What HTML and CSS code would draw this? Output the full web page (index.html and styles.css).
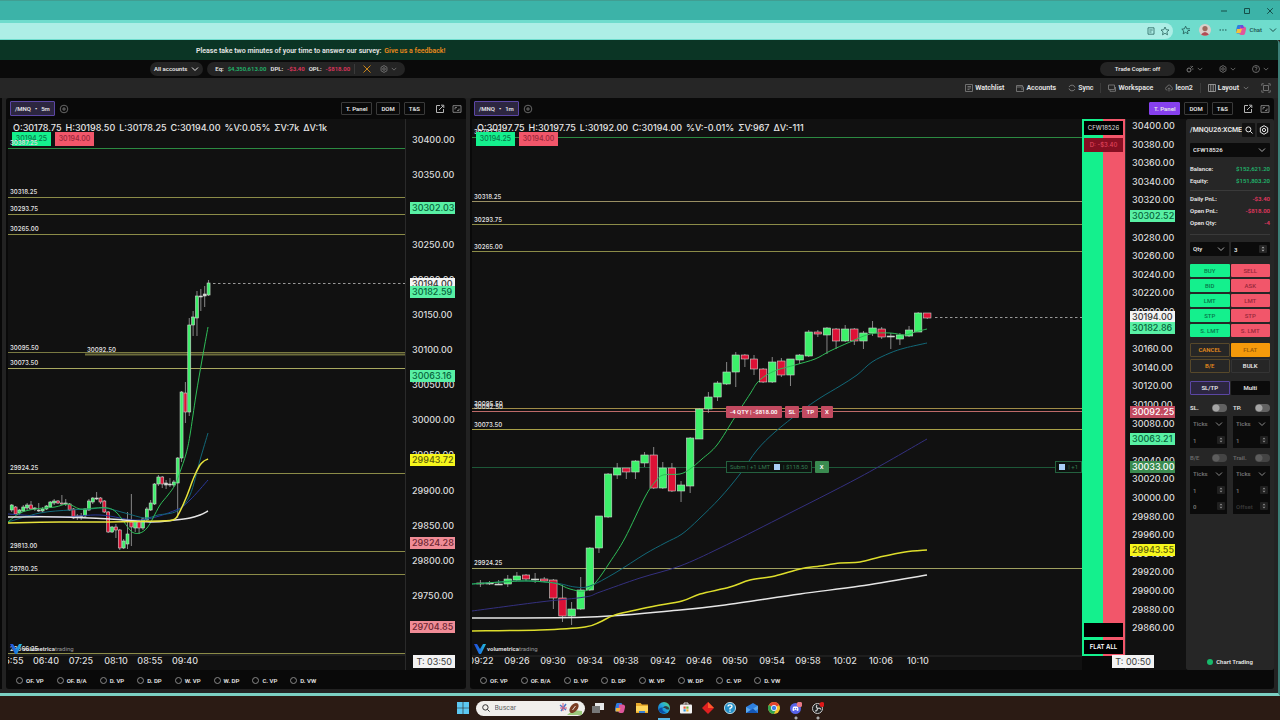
FILE: index.html
```html
<!DOCTYPE html>
<html lang="en">
<head>
<meta charset="utf-8">
<title>Volumetrica Trading</title>
<link rel="stylesheet" href="styles.css">
</head>
<body>
<svg class="defs" width="0" height="0" aria-hidden="true">
  <defs>
    <linearGradient id="logo" x1="0" x2="1"><stop offset="0" stop-color="#2447d8"/><stop offset=".5" stop-color="#1b7be0"/><stop offset="1" stop-color="#27c4d8"/></linearGradient>
    <linearGradient id="edge" x1="0" x2="1" y1="1" y2="0"><stop offset="0" stop-color="#0b63c4"/><stop offset=".55" stop-color="#24a9dc"/><stop offset="1" stop-color="#57dd6b"/></linearGradient>
    <symbol id="chev" viewBox="0 0 8 8"><path d="M1 2.5 4 5.5 7 2.5" fill="none" stroke="currentColor"/></symbol>
    <symbol id="gear" viewBox="0 0 10 10"><path d="M5 .7 8.7 2.8V7.2L5 9.3 1.3 7.2V2.8Z" fill="none" stroke="currentColor"/><circle cx="5" cy="5" r="1.6" fill="none" stroke="currentColor"/></symbol>
    <symbol id="plus" viewBox="0 0 10 10"><circle cx="5" cy="5" r="3.8" fill="none" stroke="currentColor" stroke-width=".8"/><path d="M5 3V7M3 5H7" stroke="currentColor" stroke-width=".8"/></symbol>
    <symbol id="popout" viewBox="0 0 10 10"><path d="M5 1.5H1.5V8.5H8.5V5M4 6 8.5 1.5M6 1.2H8.8V4" fill="none" stroke="currentColor"/></symbol>
    <symbol id="expand" viewBox="0 0 10 10"><path d="M1 1.7H9V8.3H1ZM3 5.5V3.6H5M7 4.5V6.4H5" fill="none" stroke="currentColor" stroke-width=".9"/></symbol>
    <symbol id="star" viewBox="0 0 10 10"><path d="M5 1 6.2 3.7 9 4 6.9 5.9 7.5 8.8 5 7.3 2.5 8.8 3.1 5.9 1 4 3.8 3.7Z" fill="none" stroke="currentColor" stroke-width=".8"/></symbol>
  </defs>
</svg>

<div class="browser">
  <div class="titlebar">
    <button class="bare" aria-label="Minimize"><svg class="i8" viewBox="0 0 8 8"><path d="M1 4H7" stroke="currentColor"/></svg></button>
    <button class="bare" aria-label="Maximize"><svg class="i8" viewBox="0 0 8 8"><path d="M1.5 1.5H6.5V6.5H1.5Z" fill="none" stroke="currentColor"/></svg></button>
    <button class="bare" aria-label="Close"><svg class="i8" viewBox="0 0 8 8"><path d="M1.2 1.2 6.8 6.8M6.8 1.2 1.2 6.8" stroke="currentColor"/></svg></button>
  </div>
  <div class="addressrow">
    <div class="address">
      <svg class="i8" viewBox="0 0 8 8"><path d="M1 .8H7V7.2H1ZM2.3 3H5.7M2.3 5H4.5" fill="none" stroke="currentColor" stroke-width=".8"/></svg>
      <svg class="i10"><use href="#star"/></svg>
    </div>
    <svg class="i10" viewBox="0 0 10 10"><path d="M7.500 5.500 6.500 6 7 8.800 4.600 7.400 2.200 8.800 2.700 5.900 .8 4.200 3.400 3.800 4.600 1.200 5.800 3.800H9M7 5.500H9" fill="none" stroke="currentColor" stroke-width=".9"/></svg>
    <svg class="i12" viewBox="0 0 12 12"><circle cx="6" cy="6" r="6" fill="#d9cfcb"/><circle cx="6" cy="4.6" r="2.6" fill="#9c6a5e"/><path d="M2 10.5Q6 5.5 10 10.5Q6 13 2 10.5" fill="#b04d55"/></svg>
    <svg class="i8" viewBox="0 0 8 8" fill="currentColor"><circle cx="1.2" cy="4" r=".8"/><circle cx="4" cy="4" r=".8"/><circle cx="6.8" cy="4" r=".8"/></svg>
    <button class="bare chat"><svg class="i12" viewBox="0 0 12 12"><path d="M3 1H7Q8.500 1 8 3L6.500 8Q6 10 4.500 9.500H2.500Q.5 9 1 6.500L2 2.500Q2.300 1 3 1" fill="#2f7de0"/><path d="M5 2.500H9Q11.500 3 11 5.500L10 9.500Q9.500 11 8 11H6Q4 11 4.500 9Z" fill="#e0569b"/><path d="M2 5H7L5.500 9H1Z" fill="#f3c43c"/><path d="M5.500 1H8L9 4H5.500Z" fill="#6a4be0"/></svg>Chat<svg class="i8"><use href="#chev"/></svg></button>
  </div>
</div>

<div class="app">
  <div class="survey"><span>Please take two minutes of your time to answer our survey:</span> <a href="#">Give us a feedback!</a></div>

  <div class="accountbar">
    <button class="pill accounts">All accounts <svg class="i8"><use href="#chev"/></svg></button>
    <div class="pill figures">
      <span>Eq:</span><span class="up">$4,350,613.00</span>
      <span>DPL:</span><span class="down">-$3.40</span>
      <span>OPL:</span><span class="down">-$818.00</span>
      <i class="vr"></i>
      <svg class="i10 orange" viewBox="0 0 10 10"><path d="M1.500 1.500 8.500 8.500M8.500 1.500 1.500 8.500" stroke="currentColor"/></svg>
      <span class="pair dim"><svg class="i8"><use href="#gear"/></svg><svg class="i6"><use href="#chev"/></svg></span>
    </div>
    <div class="barright">
      <button class="pill copier">Trade Copier: off</button>
      <span class="pair dim"><svg class="i8" viewBox="0 0 8 8"><circle cx="3" cy="5" r="2" fill="none" stroke="currentColor"/><path d="M4.500 3.500 7 1M5 .8V2M6 4H7.500" stroke="currentColor" stroke-width=".8"/></svg><svg class="i6"><use href="#chev"/></svg></span>
      <span class="pair dim"><svg class="i8"><use href="#gear"/></svg><svg class="i6"><use href="#chev"/></svg></span>
      <span class="pair dim"><svg class="i8" viewBox="0 0 8 8" fill="none" stroke="currentColor" stroke-width=".8"><circle cx="4" cy="4" r="3.500"/><path d="M2.900 3Q3 2 4 2T5.100 3.100Q5 3.800 4 4.300V5M4 5.500V6.200"/></svg><svg class="i6"><use href="#chev"/></svg></span>
    </div>
  </div>

  <div class="toolbar">
    <button class="bare"><svg class="i8" viewBox="0 0 8 8"><path d="M.5 .5H7.500V7.500H.5ZM2.500 2.500H6M2.500 4H6M2.500 5.500H4.500" fill="none" stroke="#777" stroke-width=".9"/></svg>Watchlist</button>
    <button class="bare"><svg class="i8" viewBox="0 0 8 8"><path d="M.5 3V1.500H6.500V3M.5 3H7.500V7.500H.5ZM5 5H7.500" fill="none" stroke="#777" stroke-width=".9"/></svg>Accounts</button>
    <button class="bare"><svg class="i8" viewBox="0 0 8 8"><path d="M1 3A3.200 3.200 0 0 1 7 3.500M7 5A3.200 3.200 0 0 1 1 4.500" fill="none" stroke="#777"/></svg>Sync</button>
    <i class="vr"></i>
    <button class="bare"><svg class="i8" viewBox="0 0 8 8"><path d="M.5 1H6.500V5.500H.5ZM2 7.300H7.500V3M2 5.500V7.300" fill="none" stroke="#777" stroke-width=".9"/></svg>Workspace</button>
    <button class="bare"><svg class="i8" viewBox="0 0 8 8"><path d="M2.500 6H2Q.5 6 .5 4.500T2 3Q2.500 1 4.200 1T6.200 3Q7.600 3.200 7.600 4.600T6 6H5.500M4 7.500V4M2.800 5 4 3.800 5.200 5" fill="none" stroke="#777" stroke-width=".8"/></svg>leon2</button>
    <i class="vr"></i>
    <button class="bare"><svg class="i8" viewBox="0 0 8 8"><path d="M.5 .5H7.500V7.500H.5ZM2.800 .5V7.500M5.200 .5V7.500" fill="none" stroke="#aaa" stroke-width=".8"/></svg>Layout<svg class="i6"><use href="#chev"/></svg></button>
    <button class="bare full" aria-label="Full screen"><svg class="i10" viewBox="0 0 10 10"><path d="M.8 2.800V.8H2.800M7.200 .8H9.200V2.800M9.200 7.200V9.200H7.200M2.800 9.200H.8V7.200M2.500 2.500H7.500V7.500H2.500Z" fill="none" stroke="#777" stroke-width=".9"/></svg></button>
  </div>

  <main class="workspace">
    <aside class="sliver"></aside>

    <section class="panel panel-left">
      <header class="tabs">
        <button class="tab">/MNQ<b>•</b>5m</button>
        <svg class="i10 dim"><use href="#plus"/></svg>
        <span class="grow"></span>
        <button class="tool">T. Panel</button><button class="tool">DOM</button><button class="tool">T&amp;S</button>
        <svg class="i10 pop"><use href="#popout"/></svg><svg class="i10 max"><use href="#expand"/></svg>
      </header>
      <div class="stage">
        <div class="plot">
          <svg class="chart front" id="chart5m" role="img" aria-label="MNQ 5 minute chart"></svg>
          <div class="quote"><span>O:30178.75</span><span>H:30198.50</span><span>L:30178.25</span><span>C:30194.00</span><span>%V:0.05%</span><span>ΣV:7k</span><span>ΔV:1k</span></div>
          <div class="bidask"><button class="buy">30194.25</button><button class="sell">30194.00</button></div>
        </div>
        <div class="scale"><svg class="chart" id="scale5m"></svg><span class="timer">T: 03:50</span></div>
      </div>
      <footer class="overlays" id="overlays5m"></footer>
    </section>

    <section class="panel panel-right">
      <header class="tabs">
        <button class="tab">/MNQ<b>•</b>1m</button>
        <svg class="i10 dim"><use href="#plus"/></svg>
        <span class="grow"></span>
        <button class="tool active">T. Panel</button><button class="tool">DOM</button><button class="tool">T&amp;S</button>
        <svg class="i10 pop"><use href="#popout"/></svg><svg class="i10 max"><use href="#expand"/></svg>
      </header>
      <div class="stage">
        <div class="plot">
          <svg class="chart" id="chart1m" role="img" aria-label="MNQ 1 minute chart"></svg>
          <div class="quote"><span>O:30197.75</span><span>H:30197.75</span><span>L:30192.00</span><span>C:30194.00</span><span>%V:-0.01%</span><span>ΣV:967</span><span>ΔV:-111</span></div>
          <div class="bidask"><button class="buy">30194.25</button><button class="sell">30194.00</button></div>
          <div class="order position"><button>-4 QTY | -$818.00</button><button>SL</button><button>TP</button><button>X</button></div>
          <div class="order limit"><span class="ticket">Subm | +1 LMT <i class="flag"></i> | $118.50</span><button>X</button></div>
          <span class="ticket edge-ticket"><i class="flag"></i> | +1</span>
        </div>
        <div class="ladder">
          <div class="box account">CFW18526</div>
          <div class="box daily">D: -$3.40</div>
          <div class="grow"></div>
          <div class="box"></div>
          <button class="box flat">FLAT ALL</button>
        </div>
        <div class="scale"><svg class="chart" id="scale1m"></svg><span class="timer">T: 00:50</span></div>
        <form class="trade">
          <div class="symbol"><strong>/MNQU26:XCME</strong><button type="button" class="sq" aria-label="Search"><svg class="i8" viewBox="0 0 8 8"><circle cx="3.400" cy="3.400" r="2.500" fill="none" stroke="currentColor"/><path d="M5.300 5.300 7.500 7.500" stroke="currentColor"/></svg></button><button type="button" class="sq" aria-label="Settings"><svg class="i10"><use href="#gear"/></svg></button></div>
          <select class="field acct" aria-label="Account"><option>CFW18526</option></select>
          <dl class="stats"><dt>Balance:</dt><dd class="up">$152,621.20</dd><dt>Equity:</dt><dd class="up">$151,803.20</dd></dl>
          <hr>
          <dl class="stats"><dt>Daily PnL:</dt><dd class="down">-$3.40</dd><dt>Open PnL:</dt><dd class="down">-$818.00</dd><dt>Open Qty:</dt><dd class="down">-4</dd></dl>
          <hr class="low">
          <div class="two qty"><select class="field" aria-label="Size type"><option>Qty</option></select><input class="field num" aria-label="Quantity" value="3"></div>
          <div class="two orders">
            <button type="button" class="buy">BUY</button><button type="button" class="sell">SELL</button>
            <button type="button" class="buy">BID</button><button type="button" class="sell">ASK</button>
            <button type="button" class="buy">LMT</button><button type="button" class="sell">LMT</button>
            <button type="button" class="buy">STP</button><button type="button" class="sell">STP</button>
            <button type="button" class="buy">S. LMT</button><button type="button" class="sell">S. LMT</button>
          </div>
          <div class="two actions">
            <button type="button" class="outline">CANCEL</button><button type="button" class="amber">FLAT</button>
            <button type="button" class="outline">B/E</button><button type="button" class="outline white">BULK</button>
          </div>
          <div class="two modes"><button type="button" class="on">SL/TP</button><button type="button">Multi</button></div>
          <div class="two brackets">
            <label class="switch">SL.<input type="checkbox"></label><label class="switch">TP.<input type="checkbox"></label>
            <div class="stack"><select class="field" aria-label="SL unit"><option>Ticks</option></select><input class="field num" aria-label="SL ticks" value="1"></div>
            <div class="stack"><select class="field" aria-label="TP unit"><option>Ticks</option></select><input class="field num" aria-label="TP ticks" value="1"></div>
          </div>
          <div class="two brackets muted">
            <label class="switch">B/E<input type="checkbox"></label><label class="switch">Trail.<input type="checkbox"></label>
            <div class="stack"><select class="field" aria-label="B/E unit"><option>Ticks</option></select><input class="field num" aria-label="B/E ticks" value="1"><input class="field num" aria-label="B/E offset" value="0"></div>
            <div class="stack"><select class="field" aria-label="Trail unit"><option>Ticks</option></select><input class="field num" aria-label="Trail ticks" value="1"><input class="field num" aria-label="Trail offset" placeholder="Offset"></div>
          </div>
          <div class="grow"></div>
          <div class="status"><i></i>Chart Trading</div>
        </form>
      </div>
      <footer class="overlays" id="overlays1m"></footer>
    </section>
  </main>
</div>

<nav class="taskbar">
  <svg class="i12" viewBox="0 0 12 12" fill="#5cc8f2"><path d="M0 0H5.700V5.700H0ZM6.300 0H12V5.700H6.300ZM0 6.300H5.700V12H0ZM6.300 6.300H12V12H6.300Z"/></svg>
  <label class="search"><svg class="i8" viewBox="0 0 8 8"><circle cx="3.400" cy="3.400" r="2.700" fill="none" stroke="#333"/><path d="M5.400 5.400 7.600 7.600" stroke="#333"/></svg><input type="text" placeholder="Buscar" aria-label="Buscar">
    <svg class="doodle" viewBox="0 0 24 14"><path d="M8 14Q14 8 23 10V14Z" fill="#9cc97c"/><path d="M1 4 7 9M7 3 2 10" stroke="#4d76c9" stroke-width="1.500"/><path d="M4 2V10M1 7H8" stroke="#d65a7c"/><ellipse cx="15" cy="7" rx="5.800" ry="3.600" transform="rotate(-50 15 7)" fill="#7a3d24"/><path d="M13.500 9 16.500 5" stroke="#fff" stroke-width=".8"/></svg></label>
  <svg class="i12" viewBox="0 0 12 12"><path d="M3 1H12V8H3Z" fill="#e8e8e8"/><path d="M0 4H8V11H0Z" fill="#777"/></svg>
  <svg class="i12" viewBox="0 0 12 12"><path d="M3 1H7Q8.500 1 8 3L6.500 8Q6 10 4.500 9.500H2.500Q.5 9 1 6.500L2 2.500Q2.300 1 3 1" fill="#2f7de0"/><path d="M5 2.500H9Q11.500 3 11 5.500L10 9.500Q9.500 11 8 11H6Q4 11 4.500 9Z" fill="#e0569b"/><path d="M2 6H6.500L5.500 9.500H1.500Z" fill="#f3b43c"/></svg>
  <svg class="i12" viewBox="0 0 12 12"><path d="M0 1H4.500L6 2.500H12V11H0Z" fill="#e8a92c"/><path d="M0 4H12V9.500H0Z" fill="#ffd65c"/><path d="M3 9H9V11H3Z" fill="#3a7fd0"/></svg>
  <span class="current"><svg class="i12" viewBox="0 0 12 12"><circle cx="6" cy="6" r="6" fill="url(#edge)"/><path d="M5 5.500Q3 9 8 10.300 4 12.500 1 9 .5 5 5 5.500" fill="#0a4fa8"/><path d="M7 6Q9 8.500 11.500 7 11 4.500 8 4 5.500 4 5 6Z" fill="#2b1b14" opacity=".75"/></svg></span>
  <svg class="i12" viewBox="0 0 12 12"><path d="M4 2.500V1H8V2.500" fill="none" stroke="#ddd"/><rect y="2.500" width="12" height="9" rx="1" fill="#f2f2f2"/><path d="M3.500 4.500H5.700V6.700H3.500Z" fill="#e8563a"/><path d="M6.300 4.500H8.500V6.700H6.300Z" fill="#6fb53a"/><path d="M3.500 7.300H5.700V9.500H3.500Z" fill="#2f98e0"/><path d="M6.300 7.300H8.500V9.500H6.300Z" fill="#f3b62c"/></svg>
  <svg class="i12" viewBox="0 0 12 12"><path d="M6 0 12 6 6 12 0 6Z" fill="#e02020"/><path d="M6 0 12 6 6 6Z" fill="#ff5a2c"/></svg>
  <svg class="i12" viewBox="0 0 12 12"><circle cx="6" cy="6" r="5.600" fill="#2590c8" stroke="#d9f0fa" stroke-width=".8"/><path d="M4 4.500Q4 2.800 6 2.800T8 4.500Q8 5.600 6 6.300V7.400M6 8.400V9.700" fill="none" stroke="#fff" stroke-width="1.300"/></svg>
  <svg class="i12" viewBox="0 0 12 12"><path d="M0 5 7 1 12 4V11H0Z" fill="#2d7fe0"/><path d="M0 5 5 8 12 3.500V7L6 11H0Z" fill="#5aa8ee"/><path d="M0 11 7 6.500 12 11Z" fill="#1557b8"/></svg>
  <svg class="i12" viewBox="0 0 12 12"><circle cx="6" cy="6" r="6" fill="#f4c52c"/><path d="M6 6 .8 3A6 6 0 0 1 11.200 3Z" fill="#e2432f"/><path d="M6 6 .8 3A6 6 0 0 0 6 12L8 7Z" fill="#32a350"/><circle cx="6" cy="6" r="2.700" fill="#3f7fe8" stroke="#fff" stroke-width=".8"/></svg>
  <span class="running"><svg class="i12" viewBox="0 0 12 12"><circle cx="5.500" cy="6.500" r="5.500" fill="#5662e8"/><path d="M2.500 8.500Q2.500 4.500 4 4.500H7Q8.500 4.500 8.500 8.500L7 9 6.500 8H4.500L4 9Z" fill="#fff"/><circle cx="4.500" cy="6.700" r=".7" fill="#5662e8"/><circle cx="6.500" cy="6.700" r=".7" fill="#5662e8"/><circle cx="9.500" cy="2.500" r="2.800" fill="#e87886"/></svg></span>
  <span class="running"><svg class="i12" viewBox="0 0 12 12"><circle cx="5.500" cy="6.500" r="5" fill="#222" stroke="#ccc"/><path d="M5.500 6.500Q3.500 5 5 3M5.500 6.500Q8 5.500 9 7.500M5.500 6.500Q5.500 9 3 9" fill="none" stroke="#ccc" stroke-width="1.200"/><circle cx="10" cy="2.500" r="2.500" fill="#e01818"/></svg></span>
</nav>
<script src="charts.js"></script>
</body>
</html>
```
FILE: styles.css
```css
* { box-sizing: border-box; }
body {
  margin: 0;
  height: 100vh;
  display: flex;
  flex-direction: column;
  background: #2b1b14;
  color: #e6e6e6;
  font: 600 6px/8px Roboto, "Liberation Sans", sans-serif;
  overflow: hidden;
}
button, input, select { font: inherit; color: inherit; margin: 0; padding: 0; border: 0; border-radius: 0; background: none; }
input, select { appearance: none; min-width: 0; outline: 0; }
a { color: #e8891c; text-decoration: none; }
svg { display: block; flex: none; }
.defs { position: absolute; }
.i6 { width: 6px; height: 6px; }
.i8 { width: 8px; height: 8px; }
.i10 { width: 10px; height: 10px; }
.i12 { width: 12px; height: 12px; }
.grow { flex: 1; }
.bare { display: flex; align-items: center; gap: 2px; }
.pair { display: flex; align-items: center; gap: 3px; }
.dim { color: #7d7d7d; }
.up { color: #21b56c; }
.down { color: #e0365f; }
.orange { color: #c98518; }
.vr { width: 1px; height: 10px; background: #3a3a3a; }

/* browser frame */
.titlebar {
  height: 20px;
  padding: 0 6px;
  display: flex;
  align-items: center;
  justify-content: flex-end;
  gap: 15px;
  background: #3cb3a8;
  border-top: 1px solid #419e92;
  color: #164e49;
}
.addressrow {
  height: 20px;
  padding-right: 3px;
  display: flex;
  align-items: center;
  gap: 8px;
  background: #6fdccd;
  color: #27635d;
}
.address {
  flex: 1;
  align-self: stretch;
  margin: 3px 0 1px;
  padding-right: 3px;
  display: flex;
  align-items: center;
  justify-content: flex-end;
  gap: 5px;
  background: #adeee6;
  border-radius: 0 8px 8px 0;
}
.chat { gap: 3px; font-weight: 500; color: #1d504b; }
.chat .i8 { margin-left: 4px; }

/* application */
.app {
  flex: 1;
  min-height: 0;
  display: flex;
  flex-direction: column;
  background: #222;
  border-right: 2px solid #3c7f77;
  border-bottom: 3px solid #7bd0c3;
  border-top-right-radius: 4px;
}
.survey {
  height: 20px;
  padding: 1px 0 0 196px;
  display: flex;
  align-items: center;
  gap: 3px;
  background: #0b3525;
  border-radius: 0 3px 0 0;
  font-size: 7px;
}
.accountbar {
  height: 18px;
  padding: 0 9px 0 150px;
  display: flex;
  align-items: center;
  gap: 4px;
  background: #0a0a0a;
}
.pill {
  height: 14px;
  padding: 0 8px;
  display: flex;
  align-items: center;
  justify-content: center;
  gap: 4px;
  border-radius: 7px;
  background: #242424;
}
.accounts { padding: 0 4px; }
.figures .orange { margin: 0 4px 0 3px; }
.barright { margin-left: auto; display: flex; align-items: center; gap: 16px; }
.copier { width: 75px; margin-right: -5px; }
.toolbar {
  height: 20px;
  padding: 0 7px;
  display: flex;
  align-items: center;
  justify-content: flex-end;
  gap: 12px;
  background: #262626;
  font-size: 7px;
}
.toolbar .vr { margin: 0 -5px; }
.toolbar .i6 { margin-left: 2px; color: #888; }
.workspace {
  flex: 1;
  min-height: 0;
  padding: 0 4px 4px 0;
  display: flex;
  gap: 4px;
}
.sliver { width: 2px; background: #080808; }
.panel {
  min-width: 0;
  padding-left: 2px;
  display: flex;
  flex-direction: column;
  background: #090909;
  border-radius: 3px;
}
.panel-left { flex: 458; }
.panel-right { flex: 802; }
.tabs { height: 21px; padding: 0 4px 0 2px; display: flex; align-items: center; gap: 4px; }
.tab {
  height: 15px;
  padding: 0 4px;
  display: flex;
  align-items: center;
  gap: 4px;
  background: #2c2640;
  border: 1px solid #5b46a4;
  border-radius: 1px;
}
.tool {
  height: 13px;
  padding: 0 4px;
  border: 1px solid #3a3a3a;
  border-radius: 1px;
}
.tool.active { background: #8640ee; border-color: #8640ee; }
.pop { margin: 0 3px 0 6px; color: #b5b5b5; }
.max { color: #8d8d8d; }
.stage { flex: 1; min-height: 0; display: flex; }
.plot { flex: 1; min-width: 0; position: relative; overflow: hidden; background: #111; }
.chart { width: 100%; height: 100%; }
.front { position: relative; z-index: 1; pointer-events: none; }
.scale { width: 61px; position: relative; background: #111; border-left: 1px solid #2a2a2a; }
.chart text { font: 500 9px Inter, sans-serif; fill: #dcdcdc; }
.chart .small { font-size: 6px; font-weight: 600; }
.chart .mark { font: 700 6px Roboto, sans-serif; }
.chart .light { font-weight: 400; fill: #999; }
.quote {
  position: absolute;
  left: 5px;
  top: 3px;
  display: flex;
  gap: 4px;
  font: 500 9px/11px Inter, sans-serif;
  white-space: nowrap;
}
.bidask {
  position: absolute;
  left: 4px;
  top: 13px;
  display: flex;
  gap: 4px;
  font: 500 7px/14px Inter, sans-serif;
}
.bidask button { width: 39px; height: 14px; }
.buy { background: #14f08d; color: #08774a; }
.sell { background: #f2566a; color: #97283a; }
.timer {
  position: absolute;
  right: 11px;
  bottom: 2px;
  padding: 0 3px;
  background: #f3f3f3;
  color: #3c3c3c;
  font: 400 9px/13px Inter, sans-serif;
  white-space: nowrap;
}
.panel-right .timer { right: 32px; }
.overlays { height: 19px; padding: 2px 8px 0; display: flex; align-items: center; gap: 13px; }
.overlays label { display: flex; align-items: center; gap: 3px; }
.overlays input { width: 7px; height: 7px; border: 1px solid #888; border-radius: 50%; }

/* orders shown over the chart */
.order { position: absolute; left: 254px; display: flex; gap: 3px; line-height: 8px; }
.order button { height: 12px; padding: 0 4px; border-radius: 1px; }
.position { top: 287px; }
.position button { background: #c24a60; color: #fff; }
.limit { top: 342px; }
.limit button { background: #3a8b50; color: #fff; padding: 0 5px; }
.ticket {
  height: 12px;
  padding: 0 3px;
  display: flex;
  align-items: center;
  gap: 2px;
  background: #0d120f;
  border: 1px solid #24613f;
  color: #347a50;
  font-weight: 400;
  white-space: pre;
}
.flag { width: 6px; height: 6px; background: #a8cdf5; }
.edge-ticket { position: absolute; right: 0; top: 342px; }

.ladder {
  width: 43px;
  margin-bottom: 14px;
  padding: 2px;
  display: flex;
  flex-direction: column;
  gap: 3px;
  background: linear-gradient(90deg, #14f08d 49%, #f2566a 49%);
}
.box { height: 14px; background: #000; text-align: center; font: 500 6px/14px Inter, sans-serif; color: #d0d0d0; }
.daily { background: #860f22; color: #e0445c; }
.flat { font-weight: 600; color: #fff; }

/* order entry */
.trade {
  width: 88px;
  padding: 4px 4px 3px;
  display: flex;
  flex-direction: column;
  background: #262626;
  border-radius: 2px;
}
.trade button { border-radius: 1px; }
.symbol { display: flex; align-items: center; height: 14px; font-size: 7px; }
.symbol strong { flex: 1; min-width: 0; font-weight: 600; white-space: nowrap; }
.sq { width: 13px; height: 14px; display: flex; align-items: center; justify-content: center; background: #111; flex: none; }
.sq + .sq { margin-left: 2px; }
.field { width: 100%; height: 14px; padding: 0 3px; background-color: #0b0b0b; background-repeat: no-repeat; border-radius: 1px; }
select.field { background-image: url("data:image/svg+xml,%3Csvg xmlns='http://www.w3.org/2000/svg' width='8' height='8'%3E%3Cpath d='M1 2.500 4 5.500 7 2.500' fill='none' stroke='%23aaa'/%3E%3C/svg%3E"); background-position: right 4px center; }
.num { background-image: url("data:image/svg+xml,%3Csvg xmlns='http://www.w3.org/2000/svg' width='8' height='8'%3E%3Crect width='8' height='8' rx='1' fill='%23262626'/%3E%3Cpath d='M2.500 3.200 4 1.500 5.500 3.200ZM2.500 4.800 4 6.500 5.500 4.800Z' fill='%23aaa'/%3E%3C/svg%3E"); background-position: right 3px center; }
.acct { margin: 6px 0; }
.stats { margin: 0; display: grid; grid-template-columns: 1fr auto; line-height: 12px; }
.stats dd { margin: 0; text-align: right; }
.trade hr { width: 100%; height: 1px; margin: 3px 0 2px; border: 0; background: #3a3a3a; }
.trade .low { margin: 5px 0 3px; }
.two { display: grid; grid-template-columns: 1fr 1fr; gap: 2px; }
.qty { margin: 4px 0 8px; }
.orders { gap: 2px 1px; }
.orders button { height: 13px; font-weight: 500; }
.actions { margin-top: 6px; gap: 2px 1px; }
.actions button { height: 14px; }
.outline { border: 1px solid #57482a; color: #e38a1c; }
.trade .white { border-color: #343434; color: #e6e6e6; }
.amber { background: #f59a0b; color: #9c5c07; }
.modes { margin-top: 8px; gap: 1px; }
.modes button { height: 14px; background: #0b0b0b; }
.modes .on { background: #2c2640; border: 1px solid #5b46a4; }
.brackets { margin-top: 8px; gap: 3px 6px; }
.switch { display: flex; align-items: center; justify-content: space-between; height: 10px; }
.switch input { width: 15px; height: 8px; border-radius: 4px; background: radial-gradient(circle at 4px 4px, #a5a5a5 3px, #626262 4px); }
.stack { display: flex; flex-direction: column; background: #0b0b0b; border-radius: 1px; color: #8f8f8f; }
.stack .field { height: 16px; opacity: .8; }
.stack .num { background-position: right 2px center; }
.muted { margin-top: 5px; color: #6c6c6c; }
.muted .switch input { background: radial-gradient(circle at 4px 4px, #5d5d5d 3px, #444 4px); }
::placeholder { color: #444; opacity: 1; }
.status { display: flex; align-items: center; justify-content: center; gap: 3px; height: 10px; }
.status i { width: 6px; height: 6px; border-radius: 50%; background: #17b96b; }

/* system taskbar */
.taskbar { height: 24px; display: flex; align-items: center; justify-content: center; gap: 10px; background: #2b1b14; }
.search {
  width: 109px;
  height: 15px;
  margin: 0 -3px;
  padding: 0 2px 0 6px;
  display: flex;
  align-items: center;
  gap: 5px;
  border-radius: 8px;
  background: #f1efec;
}
.search input { flex: 1; font-size: 7px; font-weight: 400; }
.search ::placeholder { color: #666; }
.doodle { width: 24px; height: 14px; }
.current { height: 24px; padding-top: 6px; border-bottom: 2px solid #58b5e4; }
.running { height: 24px; padding-top: 6px; background: radial-gradient(circle at 50% 22px, #aaa 1px, transparent 2px); }
```
FILE: charts.js
```js
const NS = 'http://www.w3.org/2000/svg';

function add(parent, name, attrs, text) {
  const el = document.createElementNS(NS, name);
  for (const key in attrs) el.setAttribute(key, attrs[key]);
  if (text !== undefined) el.textContent = text;
  parent.appendChild(el);
  return el;
}

const UP = '#3cf06a', DOWN = '#de1136', FLAT = '#d5d5d5';
const LEVEL = '#8c8c48';

// Candles: body top, body bottom, wick top, wick bottom, direction.
// Coordinates are measured from the top-left corner of the plot.
const candles5m = [
  [386,391,385,393,'u'],[388,395,387,396,'d'],[391,394,390,396,'u'],[388,392,386,393,'u'],[386,389,384,391,'u'],
  [386,390,382,391,'d'],[389,390,388,392,'f'],[391,392,384,393,'f'],[390,392,388,394,'u'],[387,390,386,391,'u'],
  [383,388,382,389,'u'],[382,384,380,386,'u'],[382,384,381,385,'d'],[384,385,376,386,'d'],[384,385,380,387,'f'],
  [385,391,384,392,'d'],[390,399,389,400,'d'],[397,398,395,401,'f'],[397,398,394,401,'f'],[390,397,389,398,'u'],
  [382,391,380,392,'u'],[379,383,378,385,'u'],[379,380,373,381,'f'],[379,383,378,385,'d'],[382,393,381,394,'d'],
  [393,413,392,414,'d'],[408,413,407,414,'u'],[408,411,405,419,'d'],[411,429,410,431,'d'],[422,429,420,430,'u'],
  [415,425,393,430,'u'],[403,408,375,427,'d'],[402,409,401,413,'u'],[403,409,401,415,'d'],[400,409,398,411,'u'],
  [390,401,388,402,'u'],[384,391,381,392,'u'],[365,385,364,386,'u'],[358,365,356,367,'u'],[358,365,357,369,'d'],
  [364,366,361,370,'f'],[365,366,359,368,'f'],[363,366,361,368,'u'],[339,364,338,399,'u'],[273,339,272,343,'u'],
  [274,293,263,304,'d'],[206,293,199,297,'u'],[198,206,192,217,'u'],[177,199,172,217,'u'],[177,178,170,192,'f'],
  [175,177,167,188,'f'],[164,176,161,177,'u']
];
const candles1m = [
  [464,465,461,468,'f'],[464,465,462,466,'f'],[465,466,461,466,'f'],[460,465,456,468,'u'],[457,461,453,462,'u'],
  [456,460,455,462,'d'],[460,461,454,464,'f'],[460,462,458,463,'d'],[461,479,460,490,'d'],[479,497,466,503,'d'],
  [490,497,483,506,'u'],[471,490,458,491,'u'],[429,471,428,472,'u'],[397,429,397,434,'u'],[355,398,354,399,'u'],
  [349,356,344,360,'u'],[349,353,349,360,'d'],[342,353,341,360,'u'],[336,344,333,348,'u'],[336,369,328,370,'d'],
  [349,369,343,370,'u'],[349,372,344,373,'d'],[366,372,362,383,'u'],[319,367,318,374,'u'],[290,320,289,320,'u'],
  [278,290,273,294,'u'],[264,278,262,282,'u'],[253,265,243,266,'u'],[236,253,233,268,'u'],[236,240,235,248,'d'],
  [240,250,236,256,'d'],[250,263,249,264,'d'],[243,263,238,264,'u'],[242,256,239,258,'d'],[240,256,240,267,'u'],
  [236,241,235,245,'u'],[213,237,211,238,'u'],[213,215,211,218,'d'],[209,216,208,235,'u'],[210,222,209,230,'d'],
  [210,222,206,223,'u'],[210,222,209,226,'d'],[214,222,212,230,'u'],[209,214,202,217,'u'],[210,218,208,220,'d'],
  [217,218,214,230,'f'],[216,220,214,226,'u'],[211,217,207,218,'u'],[194,213,193,213,'u'],[194,199,194,200,'d']
];

const chart5m = {
  first: 3.7, step: 3.86, body: 3,
  axis: 536,
  levels: [[29,'#2c8a42',0,1],[78,LEVEL,0,1],[95,LEVEL,0,1],[115,LEVEL,0,1],[233,'#7a7a42',0,1],[235,'#6c6c3c',77,2],
           [249,'#a8a860',0,1],[354,LEVEL,0,1],[432,LEVEL,0,1],[455,LEVEL,0,1],[534,LEVEL,0,1]],
  names: [[2,27,'30387.25'],[2,76,'30318.25'],[2,93,'30293.75'],[2,113,'30265.00'],[2,232,'30095.50'],[79,234,'30092.50'],
          [2,247,'30073.50'],[2,352,'29924.25'],[2,430,'29813.00'],[2,453,'29780.25'],[2,533,'29666.25']],
  last: [164, 205],
  times: [[3,'05:55'],[38,'06:40'],[73,'07:25'],[108,'08:10'],[142,'08:55'],[177,'09:40']],
  lines: [
    ['#28389a','0,395 52,398 92,396 132,401 168,391 182,381 200,361',1],
    ['#126878','0,403 32,394 62,391 82,390 97,389 117,394 137,399 150,396 169,392 182,376 192,341 200,314',1],
    ['#2fbd58','0,403 12,394 27,390 47,388 60,385 72,390 87,389 100,389 108,393 116,403 124,413 132,414 139,409 145,399 152,386 160,376 167,366 172,353 178,335 182,316 188,276 194,241 200,208',1],
    ['#e6e6e6','0,398 52,398 102,400 142,403 167,401 182,399 192,396 200,392',1.5],
    ['#e8e33c','0,404 52,403 102,403 152,402 165,401 170,396 178,379 186,358 192,346 196,342 200,340',1.5]
  ]
};
const chart1m = {
  first: 8.4, step: 9.12, body: 7.4,
  axis: 537,
  levels: [[18,'#2c8a42',0,1],[82,'#9a9064',0,1],[105,LEVEL,0,1],[132,LEVEL,0,1],[289,'#a08c48',0,1],[292,'#bd6a68',0,1],
           [310,'#a8a048',0,1],[348,'#1d5838',0,1],[449,'#a0a060',0,1]],
  names: [[2,16,'30387.25'],[2,81,'30318.25'],[2,104,'30293.75'],[2,131,'30265.00'],[2,288,'30095.50'],[2,291,'30092.50'],
          [2,309,'30073.50'],[2,447,'29924.25']],
  last: [198, 463],
  times: [[9,'09:22'],[45,'09:26'],[81,'09:30'],[118,'09:34'],[154,'09:38'],[191,'09:42'],[227,'09:46'],[263,'09:50'],
          [300,'09:54'],[336,'09:58'],[373,'10:02'],[409,'10:06'],[446,'10:10']],
  lines: [
    ['#34307f','0,492 68,483 113,478 128,473 168,459 208,447 248,429 308,399 388,358 455,320',1],
    ['#126878','0,465 48,462 83,464 103,468 118,467 143,454 173,435 193,424 210,415 227,400 248,379 268,355 285,331 303,313 328,293 348,279 368,267 385,256 400,243 418,234 433,229 455,224',1],
    ['#2fbd58','0,465 48,462 73,463 86,465 98,470 113,472 124,463 138,443 153,419 173,378 183,363 191,356 208,355 218,350 230,340 245,326 263,298 278,275 285,264 293,257 305,251 323,246 343,240 358,232 378,223 398,215 418,214 433,216 443,213 455,210',1],
    ['#e6e6e6','0,499 118,498 208,491 253,486 328,475 388,467 455,456',1.5],
    ['#dede2c','0,512 68,511 113,508 128,503 143,496 178,488 210,482 228,475 258,468 278,461 303,457 328,450 348,447 368,444 388,443 408,438 433,433 455,431',1.5]
  ]
};

// Passes a smooth curve through the points.
function smooth(list) {
  const p = list.split(' ').map(s => s.split(',').map(Number));
  let d = `M${p[0]}`;
  for (let i = 0; i < p.length - 1; i++) {
    const a = p[i - 1] || p[i], b = p[i], c = p[i + 1], e = p[i + 2] || c;
    d += `C${b[0] + (c[0] - a[0]) / 6},${b[1] + (c[1] - a[1]) / 6} ${c[0] - (e[0] - b[0]) / 6},${c[1] - (e[1] - b[1]) / 6} ${c}`;
  }
  return d;
}

function drawChart(id, cfg, candles) {
  const svg = document.getElementById(id);
  cfg.levels.forEach(([y, stroke, x, w]) =>
    add(svg, 'line', { x1: x, x2: '100%', y1: y + 0.5, y2: y + 0.5, stroke, 'stroke-width': w }));
  add(svg, 'line', { x1: cfg.last[1], x2: '100%', y1: cfg.last[0] + 0.5, y2: cfg.last[0] + 0.5, stroke: '#999', 'stroke-dasharray': '2.5 2.5' });
  candles.forEach(([top, bottom, high, low, dir], i) => {
    const x = cfg.first + i * cfg.step;
    const fill = dir === 'u' ? UP : dir === 'd' ? DOWN : FLAT;
    add(svg, 'line', { x1: x, x2: x, y1: high, y2: low, stroke: '#a5a5a5', 'stroke-width': 0.8 });
    add(svg, 'rect', { x: x - cfg.body / 2, y: top, width: cfg.body, height: bottom - top, fill, stroke: '#d0d8d0', 'stroke-width': 0.6 });
  });
  cfg.lines.forEach(([stroke, pts, w]) => add(svg, 'path', { d: smooth(pts), fill: 'none', stroke, 'stroke-width': w }));
  cfg.names.forEach(([x, y, t]) => add(svg, 'text', { x, y: y - 1, class: 'small' }, t));
  add(svg, 'line', { x1: 0, x2: '100%', y1: cfg.axis, y2: cfg.axis, stroke: '#2c2c2c' });
  cfg.times.forEach(([x, t]) => add(svg, 'text', { x, y: 545, 'text-anchor': 'middle' }, t));
  add(svg, 'path', { d: 'M2 525H5L8 530 11 525H14L9 535H7Z', fill: 'url(#logo)' });
  const mark = add(svg, 'text', { x: 15, y: 532, class: 'mark' }, 'volumetrica');
  add(mark, 'tspan', { class: 'light' }, 'trading');
}

const GREEN = ['#58f0a4', '#08633c'], WHITE = ['#f4f4f4', '#333'], YELLOW = ['#f6f61c', '#5c5c0c'], PINK = ['#f08c96', '#6c2632'];

function drawScale(id, top, step, priceStep, count, tags) {
  const svg = document.getElementById(id);
  for (let i = 0; i < count; i++) {
    add(svg, 'text', { x: 6, y: Math.round(top + i * step) + 3 }, (30400 - i * priceStep).toFixed(2));
  }
  tags.forEach(([y, t, [bg, fg]]) => {
    add(svg, 'rect', { x: 4, y: y - 6, width: 45, height: 12, fill: bg });
    add(svg, 'text', { x: 6, y: y + 3, style: `fill:${fg}` }, t);
  });
}

drawChart('chart5m', chart5m, candles5m);
drawChart('chart1m', chart1m, candles1m);
drawScale('scale5m', 21, 35.05, 50, 14, [
  [89, '30302.03', GREEN], [165, '30194.00', WHITE], [173, '30182.59', GREEN], [257, '30063.16', GREEN],
  [341, '29943.72', YELLOW], [424, '29824.28', PINK], [508, '29704.85', PINK]]);
drawScale('scale1m', 7, 18.6, 20, 28, [
  [97, '30302.52', GREEN], [198, '30194.00', WHITE], [209, '30182.86', GREEN], [293, '30092.25', ['#c24a60', '#fff']],
  [320, '30063.21', GREEN], [348, '30033.00', ['#3a8b50', '#fff']], [431, '29943.55', YELLOW]]);

const studies = ['OF. VP', 'OF. B/A', 'D. VP', 'D. DP', 'W. VP', 'W. DP', 'C. VP', 'D. VW'];
['overlays5m', 'overlays1m'].forEach(id => {
  document.getElementById(id).innerHTML =
    studies.map(s => `<label><input type="radio" name="${id}">${s}</label>`).join('');
});
```
